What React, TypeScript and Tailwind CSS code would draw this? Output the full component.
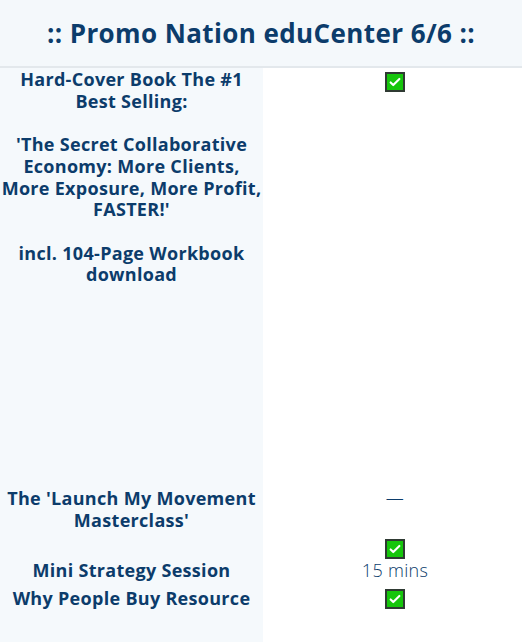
import React from 'react';

const font = { fontFamily: '"Open Sans", "Liberation Sans", sans-serif' };

function Check() {
  return (
    <span className="inline-flex h-[20px] w-[20px] items-center justify-center border-2 border-[#2f3a33] bg-[#16c60c] align-middle">
      <svg viewBox="0 0 16 16" className="h-[14px] w-[14px]" fill="none" stroke="#fff" strokeWidth="2.4" strokeLinecap="round" strokeLinejoin="round">
        <path d="M3 8.5l3 3 7-7" />
      </svg>
    </span>
  );
}

export default function App() {
  return (
    <div className="w-[522px] h-[642px] bg-white text-[#0c3c6b] overflow-hidden" style={font}>
      <header className="flex h-[68px] items-center justify-center border-b-2 border-[#e3e8ec] bg-[#f4f8fb]">
        <h1 className="text-[26px] font-bold tracking-[0.4px]">:: Promo Nation eduCenter 6/6 ::</h1>
      </header>
      <div className="grid grid-cols-[263px_1fr] text-[18px] leading-[21.7px] tracking-[0.3px]">
        <div className="h-[420px] bg-[#f5f9fc] pt-[1px] text-center font-bold">
          <p>Hard-Cover Book The #1<br />Best Selling:</p>
          <p className="mt-[21.7px]">'The Secret Collaborative Economy: More Clients, More Exposure, More Profit, FASTER!'</p>
          <p className="mt-[21.7px]">incl. 104-Page Workbook<br />download</p>
        </div>
        <div className="flex justify-center pl-[5px] pt-[2px]">
          <div className="h-[20px]"><Check /></div>
        </div>

        <div className="h-[44px] bg-[#f5f9fc] text-center font-bold">
          The 'Launch My Movement<br />Masterclass'
        </div>
        <div className="pl-[5px] text-center font-light">—</div>

        <div className="flex h-[51px] flex-col justify-end bg-[#f5f9fc] pb-[1px] text-center font-bold">
          Mini Strategy Session
        </div>
        <div className="flex flex-col items-center justify-end pb-[1px] pl-[5px]">
          <Check />
          <span className="mt-[1px] font-light">15 mins</span>
        </div>

        <div className="h-[79px] bg-[#f5f9fc] pt-[5px] text-center font-bold">Why People Buy Resource</div>
        <div className="flex justify-center pl-[5px] pt-[4px]">
          <div><Check /></div>
        </div>
      </div>
    </div>
  );
}
